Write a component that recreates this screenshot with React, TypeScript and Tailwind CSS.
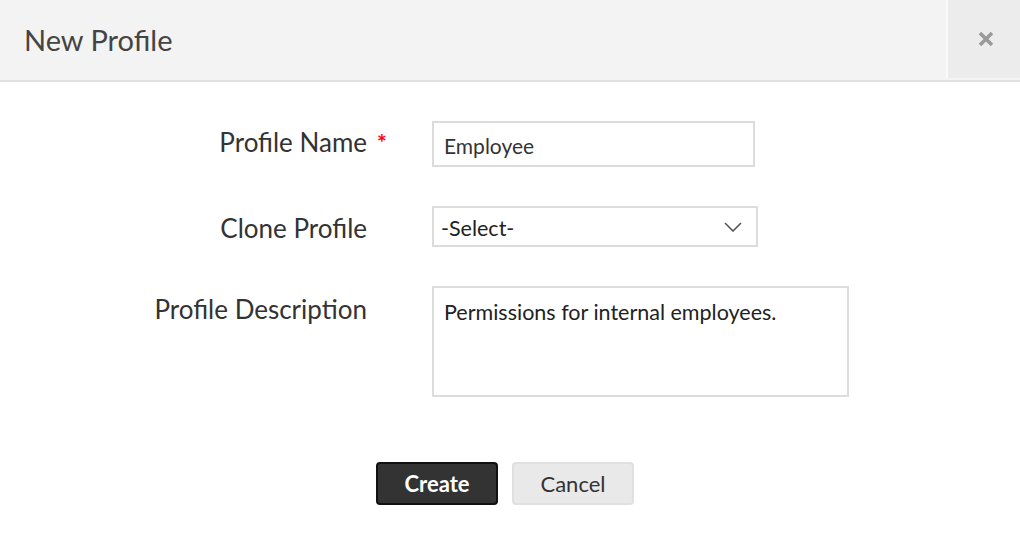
import React from "react";

export default function App() {
  return (
    <div className="w-[1020px] h-[536px] bg-white text-[#333]" style={{ fontFamily: "Lato, 'Open Sans', sans-serif" }}>
      <div className="flex h-[82px] border-b-2 border-[#e0e0e0] bg-[#f3f3f3]">
        <div className="flex flex-1 items-center pl-[24px] text-[29px] text-[#444]">New Profile</div>
        <div className="flex w-[74px] items-center justify-center border-l-2 border-[#fafafa] bg-[#ececec] pl-[4px] mb-[2px]">
          <svg width="18" height="18" viewBox="0 0 18 18">
            <path d="M3 3 L15 15 M15 3 L3 15" stroke="#9a9a9a" strokeWidth="3.6" strokeLinecap="butt" />
          </svg>
        </div>
      </div>
      <div className="pt-[39px]">
        <div className="flex items-center">
          <div className="w-[367px] text-right text-[26px] leading-none -mt-[4px]">Profile Name</div>
          <div className="w-[65px] pl-[10px] self-start pt-[10px] text-[23px] font-bold text-[#ff0000] leading-none">*</div>
          <div className="flex h-[46px] w-[323px] items-center border-2 border-[#dcdcdc] pl-[10px] pt-[4px] text-[21px] text-[#333]">Employee</div>
        </div>
        <div className="mt-[39px] flex items-center">
          <div className="w-[367px] pt-[3px] text-right text-[26px] leading-none">Clone Profile</div>
          <div className="w-[65px]" />
          <div className="flex h-[41px] w-[326px] items-center justify-between border-2 border-[#dcdcdc] pl-[7px] pr-[14px] text-[21.5px] text-[#222]">
            <span className="pt-[3px]">-Select-</span>
            <svg width="18" height="10" viewBox="0 0 18 10">
              <path d="M1 1 L9 9 L17 1" fill="none" stroke="#555" strokeWidth="1.6" />
            </svg>
          </div>
        </div>
        <div className="mt-[39px] flex items-start">
          <div className="w-[367px] pt-[10px] text-right text-[26px] leading-none">Profile Description</div>
          <div className="w-[65px]" />
          <div className="h-[111px] w-[417px] border-2 border-[#dcdcdc] pl-[10px] pt-[14px] text-[21.5px] leading-none text-[#222]">
            Permissions for internal employees.
          </div>
        </div>
        <div className="mt-[65px] flex justify-center gap-[14px] pr-[10px]">
          <button className="h-[43px] w-[122px] rounded-[4px] border-2 border-[#111] bg-[#333] text-[22px] font-bold text-white">Create</button>
          <button className="h-[43px] w-[122px] rounded-[4px] border-2 border-[#e0e0e0] bg-[#e9e9e9] text-[22px] text-[#333]">Cancel</button>
        </div>
      </div>
    </div>
  );
}
